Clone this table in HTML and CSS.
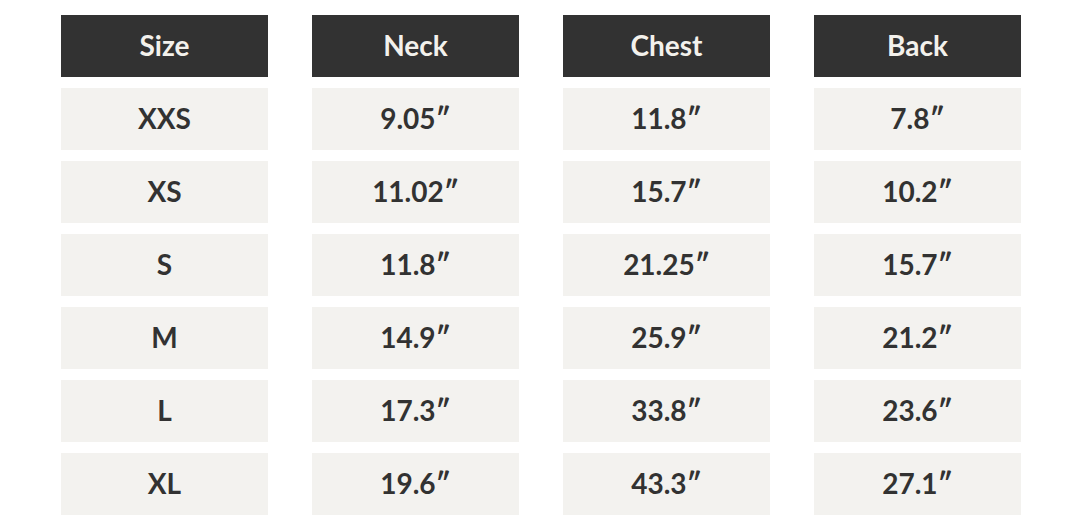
FILE: index.html
```html
<!DOCTYPE html>
<html>
<head>
<meta charset="utf-8">
<link rel="stylesheet" href="styles.css">
</head>
<body>
<div class="table">
  <div class="cell head">Size</div><div class="cell head">Neck</div><div class="cell head">Chest</div><div class="cell head">Back</div>
  <div class="cell">XXS</div><div class="cell">9.05″</div><div class="cell">11.8″</div><div class="cell">7.8″</div>
  <div class="cell">XS</div><div class="cell">11.02″</div><div class="cell">15.7″</div><div class="cell">10.2″</div>
  <div class="cell">S</div><div class="cell">11.8″</div><div class="cell">21.25″</div><div class="cell">15.7″</div>
  <div class="cell">M</div><div class="cell">14.9″</div><div class="cell">25.9″</div><div class="cell">21.2″</div>
  <div class="cell">L</div><div class="cell">17.3″</div><div class="cell">33.8″</div><div class="cell">23.6″</div>
  <div class="cell">XL</div><div class="cell">19.6″</div><div class="cell">43.3″</div><div class="cell">27.1″</div>
</div>
</body>
</html>
```
FILE: styles.css
```css
html, body {
  margin: 0;
  padding: 0;
  background: #ffffff;
}
body {
  font-family: Lato, "Open Sans", sans-serif;
  overflow: hidden;
}
.table {
  display: grid;
  grid-template-columns: repeat(4, 207px);
  grid-auto-rows: 62px;
  column-gap: 44px;
  row-gap: 11px;
  padding: 15px 0 0 61px;
}
.cell {
  background: #f3f2ef;
  color: #323232;
  font-weight: 700;
  font-size: 28px;
  display: flex;
  align-items: center;
  justify-content: center;
  padding-bottom: 2px;
  box-sizing: border-box;
}
.head {
  background: #323232;
  color: #f3f1ec;
  font-size: 28px;
}
```
